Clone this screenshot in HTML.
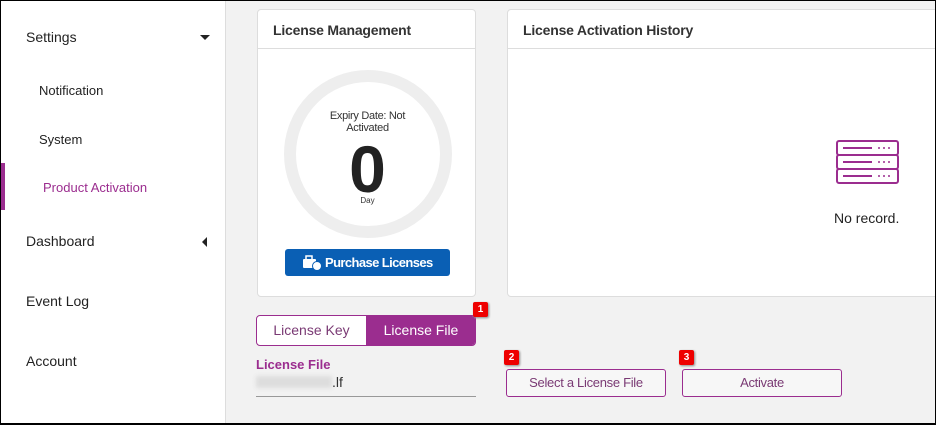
<!DOCTYPE html>
<html><head><style>
*{margin:0;padding:0;box-sizing:border-box}
body{width:936px;height:425px;overflow:hidden;font-family:"Liberation Sans",sans-serif;background:#f2f2f2;position:relative;color:#222}
.frame{position:absolute;left:0;top:0;width:936px;height:425px;border:1px solid #000;border-bottom:2px solid #000;pointer-events:none;z-index:10}
.side{position:absolute;left:0;top:0;width:226px;height:425px;background:#fff;border-right:1px solid #ddd}
.si{position:absolute;font-size:14px;color:#222}
.card{position:absolute;background:#fff;border:1px solid #ddd;border-radius:4px}
.hd{height:39px;border-bottom:1px solid #ddd;font-size:14px;font-weight:bold;padding:12px 0 0 15px;color:#333;letter-spacing:-0.2px}
.badge{position:absolute;width:15px;height:15px;background:#e00;color:#fff;font-size:10px;font-weight:bold;text-align:center;line-height:15px;border-radius:2px;box-shadow:1px 1px 2px #888}
.btn{position:absolute;height:28px;border:1px solid #9b2d8f;border-radius:3px;background:#f7f7f7;color:#7a3a74;font-size:13px;text-align:center;line-height:26px;letter-spacing:-0.3px}
</style></head><body>
<div class="side">
<div class="si" style="left:26px;top:29px">Settings</div>
<div style="position:absolute;left:200px;top:35px;border-left:5px solid transparent;border-right:5px solid transparent;border-top:5px solid #222"></div>
<div class="si" style="left:39px;top:83px;font-size:13px">Notification</div>
<div class="si" style="left:39px;top:132px;font-size:13px">System</div>
<div style="position:absolute;left:0;top:163px;width:5px;height:47px;background:#9b2d8f"></div>
<div class="si" style="left:43px;top:180px;font-size:13px;color:#9b2d8f">Product Activation</div>
<div class="si" style="left:26px;top:233px">Dashboard</div>
<div style="position:absolute;left:202px;top:237px;border-top:5px solid transparent;border-bottom:5px solid transparent;border-right:5px solid #222"></div>
<div class="si" style="left:26px;top:293px">Event Log</div>
<div class="si" style="left:26px;top:353px">Account</div>
</div>
<div class="card" style="left:257px;top:9px;width:219px;height:288px">
<div class="hd">License Management</div>
<div style="position:absolute;left:26px;top:60px;width:168px;height:168px;border:12px solid #eee;border-radius:50%"></div>
<div style="position:absolute;left:0;width:219px;top:100px;text-align:center;font-size:11px;line-height:12px;color:#333;letter-spacing:-0.3px">Expiry Date: Not<br>Activated</div>
<div style="position:absolute;left:0;width:219px;top:124px;text-align:center;font-size:66px;line-height:70px;color:#222;font-weight:bold">0</div>
<div style="position:absolute;left:0;width:219px;top:186px;text-align:center;font-size:8px;color:#333">Day</div>
<div style="position:absolute;left:27px;top:239px;width:165px;height:27px;background:#0a5fb4;border-radius:3px;color:#fff;font-size:13px;font-weight:bold;line-height:27px;padding-left:40px;letter-spacing:-0.6px;white-space:nowrap">Purchase Licenses</div>
<svg style="position:absolute;left:44px;top:245px" width="20" height="16" viewBox="0 0 20 16"><rect x="1" y="4" width="13" height="9" rx="1" fill="#fff"/><rect x="4" y="1" width="6" height="4" fill="none" stroke="#fff" stroke-width="1.5"/><circle cx="15" cy="11" r="4.5" fill="#fff" stroke="#0a5fb4" stroke-width="1"/></svg>
</div>
<div class="card" style="left:507px;top:9px;width:440px;height:288px">
<div class="hd">License Activation History</div>
<svg style="position:absolute;left:328px;top:130px" width="64" height="46" viewBox="0 0 64 46"><g fill="none" stroke="#9b2d8f" stroke-width="2"><rect x="1" y="1" width="61" height="14" rx="2"/><rect x="1" y="15" width="61" height="14" rx="2"/><rect x="1" y="29" width="61" height="14" rx="2"/></g><g stroke="#9b2d8f" stroke-width="2"><line x1="7" y1="8" x2="36" y2="8"/><line x1="7" y1="22" x2="36" y2="22"/><line x1="7" y1="36" x2="36" y2="36"/></g><g fill="#9b2d8f"><circle cx="43" cy="8" r="1"/><circle cx="48" cy="8" r="1"/><circle cx="53" cy="8" r="1"/><circle cx="43" cy="22" r="1"/><circle cx="48" cy="22" r="1"/><circle cx="53" cy="22" r="1"/><circle cx="43" cy="36" r="1"/><circle cx="48" cy="36" r="1"/><circle cx="53" cy="36" r="1"/></g></svg>
<div style="position:absolute;left:326px;top:200px;font-size:14px;color:#222">No record.</div>
</div>
<div style="position:absolute;left:256px;top:315px;width:220px;height:31px;border:1px solid #9b2d8f;border-radius:4px;overflow:hidden;background:#fff">
<div style="position:absolute;left:0;top:0;width:109px;height:29px;text-align:center;line-height:29px;font-size:14px;color:#7a3a74">License Key</div>
<div style="position:absolute;left:109px;top:0;width:110px;height:29px;background:#9b2d8f;text-align:center;line-height:29px;font-size:14px;color:#fff">License File</div>
</div>
<div class="badge" style="left:473px;top:302px">1</div>
<div style="position:absolute;left:256px;top:357px;font-size:13px;font-weight:bold;color:#9b2d8f">License File</div>
<div style="position:absolute;left:256px;top:376px;width:76px;height:12px;background:#ddd;filter:blur(2px)"></div>
<div style="position:absolute;left:332px;top:374px;font-size:14px;color:#333">.lf</div>
<div style="position:absolute;left:256px;top:396px;width:220px;height:1px;background:#999"></div>
<div class="badge" style="left:504px;top:350px">2</div>
<div class="btn" style="left:506px;top:369px;width:160px">Select a License File</div>
<div class="badge" style="left:679px;top:350px">3</div>
<div class="btn" style="left:682px;top:369px;width:160px">Activate</div>
<div class="frame"></div>
</body></html>
